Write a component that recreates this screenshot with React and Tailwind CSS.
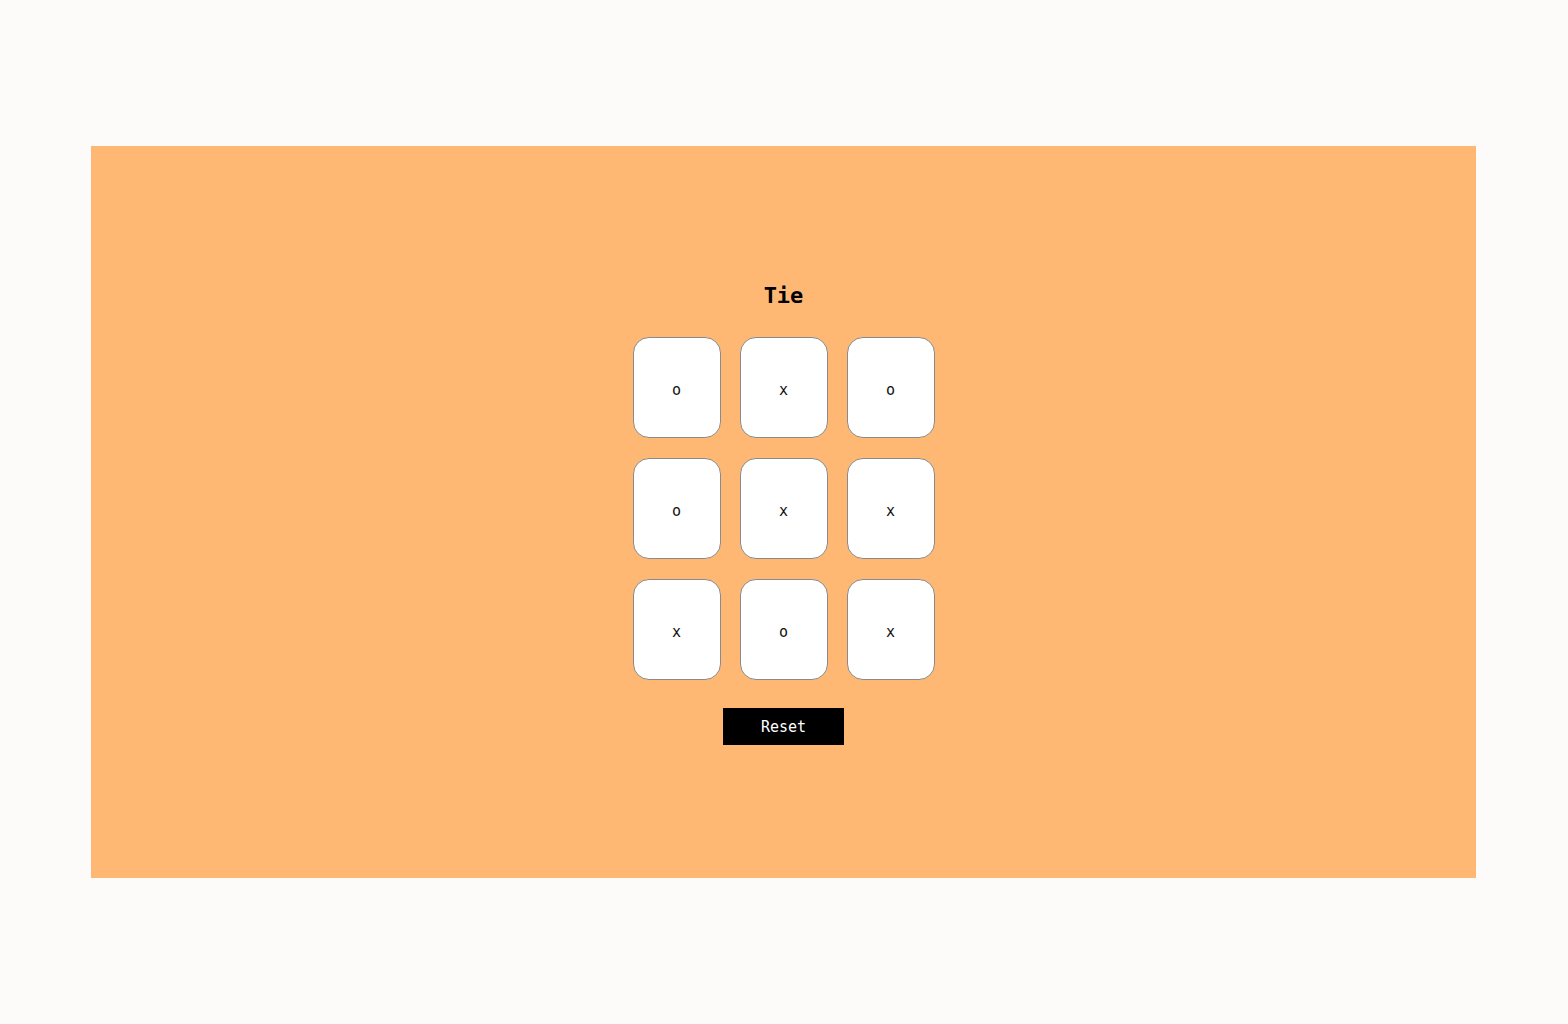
export default function App() {
  const cells = ["o", "x", "o", "o", "x", "x", "x", "o", "x"];
  return (
    <div className="min-h-[1024px] w-full bg-[#fcfbfa] pt-[146px]" style={{ fontFamily: '"DejaVu Sans Mono", monospace' }}>
      <div className="ml-[91px] flex h-[732px] w-[1385px] flex-col items-center justify-center bg-[#ffb774]">
        <h1 className="pt-[2px] text-[22px] font-bold leading-[28px] text-black">Tie</h1>
        <div className="mt-[27px] grid grid-cols-[88px_88px_88px] gap-x-[19px] gap-y-[20px]">
          {cells.map((c, i) => (
            <button
              key={i}
              className="flex h-[101px] w-[88px] items-center justify-center rounded-[16px] border border-[#8a8a8a] bg-white pt-[6px] text-[15px] text-[#111]"
            >
              {c}
            </button>
          ))}
        </div>
        <button className="mt-[28px] h-[37px] w-[121px] bg-black pt-[2px] text-[15px] font-medium text-white">Reset</button>
      </div>
    </div>
  );
}
